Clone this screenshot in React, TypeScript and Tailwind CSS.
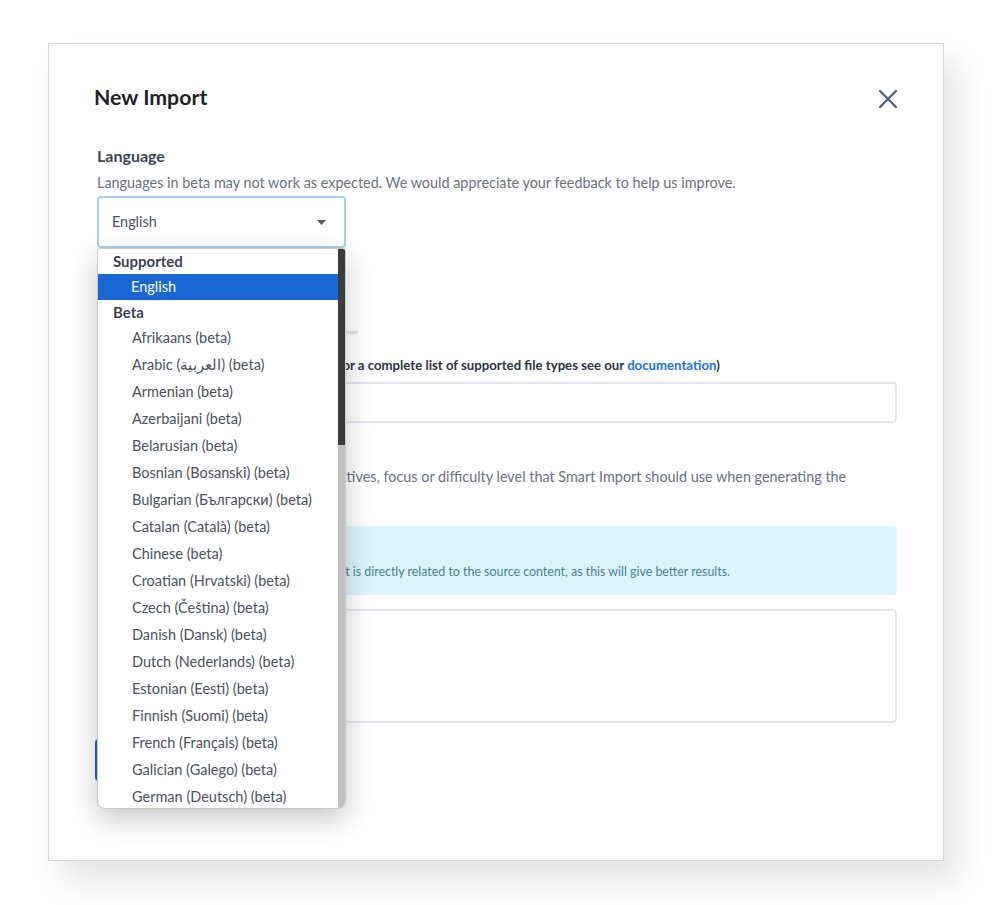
import React from "react";

const BETA_LANGUAGES = [
  "Afrikaans (beta)",
  "Arabic",
  "Armenian (beta)",
  "Azerbaijani (beta)",
  "Belarusian (beta)",
  "Bosnian (Bosanski) (beta)",
  "Bulgarian (Български) (beta)",
  "Catalan (Català) (beta)",
  "Chinese (beta)",
  "Croatian (Hrvatski) (beta)",
  "Czech (Čeština) (beta)",
  "Danish (Dansk) (beta)",
  "Dutch (Nederlands) (beta)",
  "Estonian (Eesti) (beta)",
  "Finnish (Suomi) (beta)",
  "French (Français) (beta)",
  "Galician (Galego) (beta)",
  "German (Deutsch) (beta)",
];

function LanguageMenu() {
  return (
    <div className="absolute left-0 top-full z-10 flex h-[561px] w-full overflow-hidden rounded-b-lg rounded-t-[3px] border border-[#c9c9c9] bg-white shadow-[0_10px_28px_rgba(0,0,0,0.22)]">
      <ul className="min-w-0 flex-1 text-[14.5px] text-[#4b5260]">
        <li className="flex h-[25px] items-center pl-[15px] text-[15px] font-bold text-[#3d4451]">Supported</li>
        <li className="flex h-[26px] items-center bg-[#1967d2] pl-[33px] text-white">English</li>
        <li className="flex h-[24px] items-center pl-[15px] text-[15px] font-bold text-[#3d4451]">Beta</li>
        {BETA_LANGUAGES.map((lang) => (
          <li key={lang} className="flex h-[27px] shrink-0 items-center whitespace-nowrap pl-[34px]">
            {lang === "Arabic" ? (
              <span>
                Arabic (<bdi>العربية</bdi>) (beta)
              </span>
            ) : (
              lang
            )}
          </li>
        ))}
      </ul>
      {/* scrollbar */}
      <div className="flex w-[7px] shrink-0 flex-col bg-[#c1c1c1]">
        <div className="h-[196px] bg-[#3c3c3c]" />
      </div>
    </div>
  );
}

export default function App() {
  return (
    <div className="min-h-[905px] bg-white pl-[48px] pt-[43px] font-['Lato','Noto_Sans',sans-serif]">
      <div className="flex h-[818px] w-[896px] flex-col border border-[#d6d6d6] bg-white pl-[48px] pr-[46px] pt-[39px] shadow-[14px_20px_32px_rgba(0,0,0,0.11)]">
        <div className="flex items-center justify-between">
          <h2 className="-ml-[3px] text-[21.3px] font-bold leading-[28px] text-[#1f2328]">New Import</h2>
          <button className="mr-[-1px] mt-[3px] text-[#5b6573]" aria-label="Close">
            <svg width="20" height="20" viewBox="0 0 20 20" fill="none" stroke="currentColor" strokeWidth="2.4" strokeLinecap="round">
              <path d="M2 2L18 18M18 2L2 18" />
            </svg>
          </button>
        </div>

        <div className="mt-[35px] text-[16px] font-bold leading-[20px] text-[#3d4451]">Language</div>
        <p className="mt-[7px] text-[14.4px] leading-[20px] text-[#6b7280]">
          Languages in beta may not work as expected. We would appreciate your feedback to help us improve.
        </p>

        <div className="relative mt-[3px] w-[249px]">
          <div className="flex h-[52px] items-center justify-between rounded-[4px] border-2 border-[#a3d0ec] pl-[13px] pr-[18px] text-[14.4px] text-[#4b5260]">
            <span>English</span>
            <svg width="9" height="5" viewBox="0 0 9 5">
              <path d="M0 0H9L4.5 5Z" fill="#555b63" />
            </svg>
          </div>
          <LanguageMenu />
        </div>

        <div className="mt-[42px] flex h-[44px] w-[261px] items-end gap-6 border-b-[3px] border-[#e5e7eb] pb-2 text-[14px] font-bold text-[#3d4451]">
          <span>File</span>
          <span>Website</span>
          <span>Text</span>
        </div>

        <div className="mt-[23px] text-[13.2px] font-bold leading-[16px] text-[#2d3340]">
          Upload a source file (pdf, docx, pptx, txt. For a complete list of supported file types see our{" "}
          <a className="text-[#1a73e8]">documentation</a>)
        </div>
        <div className="mt-[9px] h-[41px] rounded-[4px] border-2 border-[#e3e5ee]" />

        <div className="mt-[17px] text-[16px] font-bold leading-[20px] text-[#3d4451]">Instructions (optional)</div>
        <p className="mt-[6px] text-[14.4px] leading-[22px] text-[#6b7280]">
          Describe any specific key learning objectives, focus or difficulty level that Smart Import should use when generating the questions.
        </p>

        <div className="mt-[16px] rounded-[4px] bg-[#dcf5fd] px-[16px] pb-[15px] pt-[12px] text-[#4a7f9e]">
          <div className="text-[13px] font-bold leading-[18px]">Tip</div>
          <div className="mt-[8px] text-[12.4px] leading-[16px]">
            Make sure all the instructions in the prompt is directly related to the source content, as this will give better results.
          </div>
        </div>

        <div className="mt-[14px] h-[114px] rounded-[4px] border-2 border-[#e3e5ee]" />

        <button className="-ml-[2px] mt-[16px] h-[42px] w-[130px] rounded-[4px] bg-[#1967d2] text-[14px] font-bold text-white">
          Import
        </button>
      </div>
    </div>
  );
}
